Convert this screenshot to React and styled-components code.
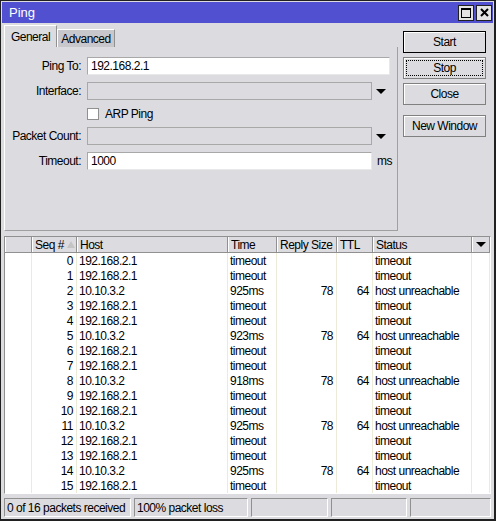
import React from "react";
import styled, { createGlobalStyle, css } from "styled-components";

const Global = createGlobalStyle`
  html, body { margin: 0; padding: 0; background: #dcdce0; }
  body { font-family: "Liberation Sans", Arial, sans-serif; font-size: 12px; letter-spacing: -0.5px; color: #000; }
`;

const Window = styled.div`
  box-sizing: border-box;
  width: 496px;
  height: 521px;
  border: 1px solid #202020;
  border-right-width: 2px;
  border-bottom-width: 2px;
  background: #dcdce0;
  display: flex;
  flex-direction: column;
  padding: 1px;
`;

const TitleBar = styled.div`
  height: 21px;
  flex: none;
  background: #5050d0;
  color: #fff;
  display: flex;
  align-items: center;
  padding: 0 1px 0 7px;
  font-size: 13px;
  letter-spacing: 0;
`;

const Title = styled.span`
  flex: 1;
`;

const TitleBtn = styled.div`
  width: 16px;
  height: 16px;
  box-sizing: border-box;
  border: 1px solid #202020;
  background: #e4e4e4;
  margin-left: 2px;
  display: flex;
  align-items: center;
  justify-content: center;
`;

const Top = styled.div`
  display: flex;
  height: 208px;
  flex: none;
  padding: 2px 0 0 2px;
  box-sizing: border-box;
`;

const TabArea = styled.div`
  width: 394px;
  display: flex;
  flex-direction: column;
`;

const TabRow = styled.div`
  display: flex;
  align-items: flex-end;
  height: 22px;
  flex: none;
`;

const Tab = styled.div`
  box-sizing: border-box;
  width: ${(p) => p.$w}px;
  display: flex;
  align-items: center;
  justify-content: center;
  border: 1px solid #fff;
  border-bottom: none;
  border-right: 1px solid #909090;
  ${(p) =>
    p.$active
      ? css`
          height: 22px;
          background: #dcdce0;
        `
      : css`
          height: 18px;
          background: #c8c8cc;
          padding-top: 1px;
        `}
`;

const Panel = styled.div`
  flex: 1;
  box-sizing: border-box;
  border: 1px solid #fff;
  border-right-color: #a0a0a0;
  border-bottom-color: #a0a0a0;
  border-top: none;
  padding-top: 10px;
  display: flex;
  flex-direction: column;
  gap: 7px;
`;

const Row = styled.div`
  display: flex;
  align-items: center;
  height: ${(p) => p.$h || 18}px;
`;

const Label = styled.div`
  width: 82px;
  text-align: right;
  padding-right: 6px;
  box-sizing: border-box;
  flex: none;
`;

const Input = styled.div`
  box-sizing: border-box;
  height: 18px;
  width: ${(p) => p.$w}px;
  border: 1px solid #a8a8a8;
  border-right-color: #e8e8e8;
  border-bottom-color: #e8e8e8;
  background: ${(p) => (p.$disabled ? "#dcdce0" : "#fff")};
  display: flex;
  align-items: center;
  padding-left: 3px;
  ${(p) =>
    p.$disabled &&
    css`
      border-color: #a8a8a8;
    `}
`;

const Arrow = styled.div`
  margin-left: ${(p) => (p.$flush ? 0 : 4)}px;
  width: 0;
  height: 0;
  border-left: 5px solid transparent;
  border-right: 5px solid transparent;
  border-top: 5px solid #000;
`;

const Suffix = styled.span`
  margin-left: 5px;
`;

const Check = styled.div`
  box-sizing: border-box;
  width: 12px;
  height: 12px;
  border: 1px solid #909090;
  background: #fff;
  margin: 0 6px 0 82px;
`;

const Buttons = styled.div`
  display: flex;
  flex-direction: column;
  padding: 6px 0 0 5px;
  gap: 4px;
`;

const Button = styled.div`
  box-sizing: border-box;
  width: 83px;
  height: 22px;
  display: flex;
  align-items: center;
  justify-content: center;
  background: #dcdce0;
  border: 1px solid #808080;
  box-shadow: inset 1px 1px 0 #fff;
  position: relative;
  ${(p) =>
    p.$default &&
    css`
      border-color: #000;
    `}
  ${(p) =>
    p.$focus &&
    css`
      &::after {
        content: "";
        position: absolute;
        inset: 2px;
        border: 1px dotted #000;
      }
    `}
  ${(p) => p.$gap && css`margin-top: 6px;`}
`;

const Table = styled.div`
  margin: 5px 2px 0 2px;
  box-sizing: border-box;
  border: 1px solid #909090;
  border-right-color: #fff;
  border-bottom-color: #fff;
  height: 258px;
  flex: none;
  background: #fff;
  display: flex;
  flex-direction: column;
  overflow: hidden;
`;

const cols = "27px 45px 151px 49px 60px 36px 99px 1fr";

const Header = styled.div`
  display: grid;
  grid-template-columns: ${cols};
  height: 16px;
  background: #dcdce0;
  flex: none;
`;

const HCell = styled.div`
  box-sizing: border-box;
  border-right: 1px solid #909090;
  border-bottom: 1px solid #909090;
  box-shadow: inset 1px 0 0 #fff;
  padding-left: 3px;
  display: flex;
  align-items: center;
  justify-content: ${(p) => (p.$center ? "center" : "flex-start")};
  gap: 3px;
  ${(p) => p.$center && css`padding-left: 0;`}
`;

const SortUp = styled.span`
  width: 0;
  height: 0;
  border-left: 4px solid transparent;
  border-right: 4px solid transparent;
  border-bottom: 7px solid #c4c4c4;
`;

const DataRow = styled.div`
  display: grid;
  grid-template-columns: ${cols};
  height: 15px;
  flex: none;
`;

const Cell = styled.div`
  box-sizing: border-box;
  border-right: 1px solid #ecebd8;
  padding: 0 3px 0 2px;
  display: flex;
  align-items: center;
  justify-content: ${(p) => (p.$right ? "flex-end" : "flex-start")};
  white-space: nowrap;
  overflow: hidden;
`;

const StatusBar = styled.div`
  display: flex;
  gap: 3px;
  margin: 4px 2px 0 2px;
  height: 19px;
  flex: none;
`;

const StatusCell = styled.div`
  box-sizing: border-box;
  width: ${(p) => p.$w}px;
  border: 1px solid #909090;
  border-right-color: #fff;
  border-bottom-color: #fff;
  display: flex;
  align-items: center;
  padding-left: 2px;
  ${(p) => p.$grow && css`flex: 1;`}
`;

const rows = Array.from({ length: 16 }, (_, i) => {
  const reach = i % 3 === 2;
  const times = { 2: "925ms", 5: "923ms", 8: "918ms", 11: "925ms", 14: "925ms" };
  return reach
    ? { seq: i, host: "10.10.3.2", time: times[i], size: "78", ttl: "64", status: "host unreachable" }
    : { seq: i, host: "192.168.2.1", time: "timeout", size: "", ttl: "", status: "timeout" };
});

export default function App() {
  return (
    <>
      <Global />
      <Window>
        <TitleBar>
          <Title>Ping</Title>
          <TitleBtn>
            <svg width="10" height="10" viewBox="0 0 10 10">
              <rect x="0.5" y="0.5" width="9" height="9" fill="none" stroke="#000" />
              <rect x="0" y="0" width="10" height="2" fill="#000" />
            </svg>
          </TitleBtn>
          <TitleBtn>
            <svg width="9" height="9" viewBox="0 0 9 9">
              <path d="M1 1 L8 8 M8 1 L1 8" stroke="#000" strokeWidth="2" />
            </svg>
          </TitleBtn>
        </TitleBar>
        <Top>
          <TabArea>
            <TabRow>
              <Tab $active $w={53}>General</Tab>
              <Tab $w={58}>Advanced</Tab>
            </TabRow>
            <Panel>
              <Row>
                <Label>Ping To:</Label>
                <Input $w={303}>192.168.2.1</Input>
              </Row>
              <Row>
                <Label>Interface:</Label>
                <Input $w={285} $disabled />
                <Arrow />
              </Row>
              <Row $h={13}>
                <Check />
                <span>ARP Ping</span>
              </Row>
              <Row>
                <Label>Packet Count:</Label>
                <Input $w={285} $disabled />
                <Arrow />
              </Row>
              <Row>
                <Label>Timeout:</Label>
                <Input $w={285}>1000</Input>
                <Suffix>ms</Suffix>
              </Row>
            </Panel>
          </TabArea>
          <Buttons>
            <Button $default>Start</Button>
            <Button $focus>Stop</Button>
            <Button>Close</Button>
            <Button $gap>New Window</Button>
          </Buttons>
        </Top>
        <Table>
          <Header>
            <HCell />
            <HCell>
              Seq # <SortUp />
            </HCell>
            <HCell>Host</HCell>
            <HCell>Time</HCell>
            <HCell>Reply Size</HCell>
            <HCell>TTL</HCell>
            <HCell>Status</HCell>
            <HCell $center>
              <Arrow $flush />
            </HCell>
          </Header>
          {rows.map((r) => (
            <DataRow key={r.seq}>
              <Cell />
              <Cell $right>{r.seq}</Cell>
              <Cell>{r.host}</Cell>
              <Cell>{r.time}</Cell>
              <Cell $right>{r.size}</Cell>
              <Cell $right>{r.ttl}</Cell>
              <Cell>{r.status}</Cell>
              <Cell />
            </DataRow>
          ))}
        </Table>
        <StatusBar>
          <StatusCell $w={127}>0 of 16 packets received</StatusCell>
          <StatusCell $w={114}>100% packet loss</StatusCell>
          <StatusCell $w={77} />
          <StatusCell $w={76} />
          <StatusCell $grow />
        </StatusBar>
      </Window>
    </>
  );
}
